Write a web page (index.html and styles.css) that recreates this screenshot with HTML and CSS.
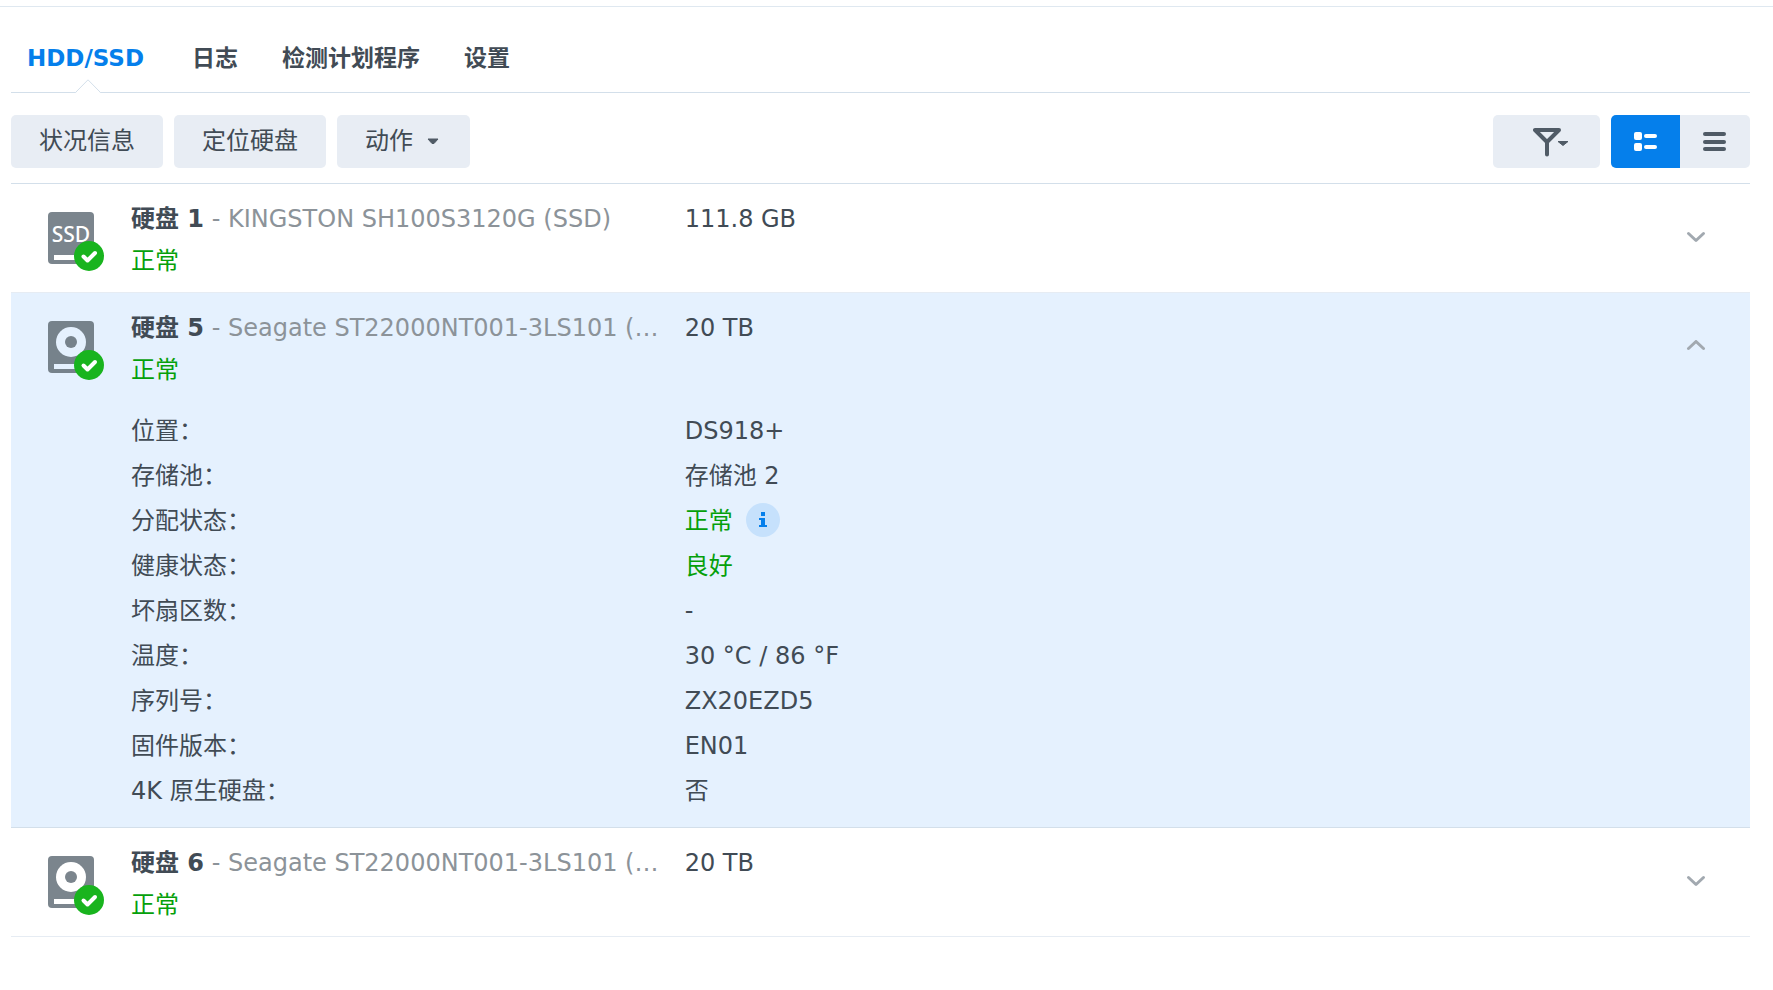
FILE: index.html
```html
<!DOCTYPE html>
<html lang="zh-CN">
<head>
    <meta charset="UTF-8">
    <meta name="viewport" content="width=device-width, initial-scale=1.0">
    <title>HDD/SSD</title>
    <link rel="stylesheet" href="styles.css">
</head>
<body>
    <main class="panel">
        <nav class="tabs">
            <a class="tab active" href="#disks">HDD/SSD
                <svg class="tab-arrow" width="26" height="14" viewBox="0 0 26 14"><path d="M0 14L1 13.5 13 .8 25 13.5 26 14z" fill="#fff"/><path d="M.5 13.5L13 .8l12.5 12.7" fill="none" stroke="#d3dfea"/></svg>
            </a>
            <a class="tab" href="#log">日志</a>
            <a class="tab" href="#schedule">检测计划程序</a>
            <a class="tab" href="#settings">设置</a>
        </nav>

        <div class="toolbar">
            <button class="btn" type="button">状况信息</button>
            <button class="btn" type="button">定位硬盘</button>
            <button class="btn menu-btn" type="button">动作
                <svg width="12" height="7" viewBox="0 0 12 7"><path d="M1 1h10L7 5.500H5z" fill="#505b66" stroke="#505b66" stroke-linejoin="round"/></svg>
            </button>
            <button class="btn filter-btn" type="button" aria-label="筛选">
                <svg width="36" height="30" viewBox="0 0 36 30">
                    <path d="M2 3h24L14 15zM14 15v12.500" fill="none" stroke="#505b66" stroke-width="4" stroke-linecap="round" stroke-linejoin="round"/>
                    <path d="M25 14.500h10L30 18.500z" fill="#505b66" stroke="#505b66" stroke-linejoin="round"/>
                </svg>
            </button>
            <div class="view-switch">
                <button class="btn view-btn active" type="button" aria-label="详细视图">
                    <svg width="24" height="20" viewBox="0 0 24 20" fill="#fff">
                        <rect x="0" y="0" width="8" height="8" rx="2"/><rect x="10" y="2" width="13" height="4" rx="2"/>
                        <rect x="0" y="11" width="8" height="8" rx="2"/><rect x="10" y="13" width="13" height="4" rx="2"/>
                    </svg>
                </button>
                <button class="btn view-btn" type="button" aria-label="列表视图">
                    <svg width="24" height="20" viewBox="0 0 24 20" fill="#505b66">
                        <rect x="0" y="0" width="23" height="4" rx="2"/><rect x="0" y="8" width="23" height="4" rx="2"/><rect x="0" y="15" width="23" height="4" rx="2"/>
                    </svg>
                </button>
            </div>
        </div>

        <section class="disk">
            <div class="disk-head">
                <svg class="disk-icon" width="60" height="60" viewBox="0 0 60 60">
                    <rect x="0" y="0" width="46" height="52" rx="4" fill="#7b858d"/>
                    <text class="ssd-label" x="23" y="30" text-anchor="middle">SSD</text>
                    <rect x="6" y="43" width="24" height="5" fill="#fff"/>
                    <circle cx="41" cy="44" r="15" fill="#19b41e"/>
                    <path d="M35.500 44.500l4 4L47 41" fill="none" stroke="#fff" stroke-width="4" stroke-linecap="round" stroke-linejoin="round"/>
                </svg>
                <div class="disk-info">
                    <div class="disk-name"><strong>硬盘 1</strong> - KINGSTON SH100S3120G (SSD)</div>
                    <div class="disk-size">111.8 GB</div>
                    <div class="ok">正常</div>
                </div>
                <button class="toggle" type="button" aria-label="展开">
                    <svg width="20" height="12" viewBox="0 0 20 12"><path d="M2.500 2.500L10 9.500l7.500-7" class="chevron"/></svg>
                </button>
            </div>
        </section>

        <section class="disk selected">
            <div class="disk-head">
                <svg class="disk-icon" width="60" height="60" viewBox="0 0 60 60">
                    <rect x="0" y="0" width="46" height="52" rx="4" fill="#76828b"/>
                    <circle cx="23" cy="21" r="15" fill="#e5f1fe"/>
                    <circle cx="23" cy="21" r="6" fill="#76828b"/>
                    <rect x="6" y="43" width="24" height="5" fill="#e5f1fe"/>
                    <circle cx="41" cy="44" r="15" fill="#19b41e"/>
                    <path d="M35.500 44.500l4 4L47 41" fill="none" stroke="#fff" stroke-width="4" stroke-linecap="round" stroke-linejoin="round"/>
                </svg>
                <div class="disk-info">
                    <div class="disk-name"><strong>硬盘 5</strong> - Seagate ST22000NT001-3LS101 (…</div>
                    <div class="disk-size">20 TB</div>
                    <div class="ok">正常</div>
                </div>
                <button class="toggle" type="button" aria-label="收起">
                    <svg width="20" height="12" viewBox="0 0 20 12"><path d="M2.500 8.500L10 1.500l7.500 7" class="chevron"/></svg>
                </button>
            </div>
            <dl class="details">
                <dt>位置：</dt><dd>DS918+</dd>
                <dt>存储池：</dt><dd>存储池 2</dd>
                <dt>分配状态：</dt>
                <dd class="with-info"><span class="ok">正常</span>
                    <button class="info" type="button" aria-label="信息">
                        <svg width="8" height="16" viewBox="0 0 8 16" fill="#057feb"><path d="M2 0h4v4H2zM0 6h6v7h2v2H0v-2h2V8H0z"/></svg>
                    </button>
                </dd>
                <dt>健康状态：</dt><dd class="ok">良好</dd>
                <dt>坏扇区数：</dt><dd>-</dd>
                <dt>温度：</dt><dd>30 °C / 86 °F</dd>
                <dt>序列号：</dt><dd>ZX20EZD5</dd>
                <dt>固件版本：</dt><dd>EN01</dd>
                <dt>4K 原生硬盘：</dt><dd>否</dd>
            </dl>
        </section>

        <section class="disk">
            <div class="disk-head">
                <svg class="disk-icon" width="60" height="60" viewBox="0 0 60 60">
                    <rect x="0" y="0" width="46" height="52" rx="4" fill="#7b858d"/>
                    <circle cx="23" cy="21" r="15" fill="#fff"/>
                    <circle cx="23" cy="21" r="6" fill="#7b858d"/>
                    <rect x="6" y="43" width="24" height="5" fill="#fff"/>
                    <circle cx="41" cy="44" r="15" fill="#19b41e"/>
                    <path d="M35.500 44.500l4 4L47 41" fill="none" stroke="#fff" stroke-width="4" stroke-linecap="round" stroke-linejoin="round"/>
                </svg>
                <div class="disk-info">
                    <div class="disk-name"><strong>硬盘 6</strong> - Seagate ST22000NT001-3LS101 (…</div>
                    <div class="disk-size">20 TB</div>
                    <div class="ok">正常</div>
                </div>
                <button class="toggle" type="button" aria-label="展开">
                    <svg width="20" height="12" viewBox="0 0 20 12"><path d="M2.500 2.500L10 9.500l7.500-7" class="chevron"/></svg>
                </button>
            </div>
        </section>
    </main>
</body>
</html>
```
FILE: styles.css
```css
:root {
    --text: #414b55;
    --muted: #8c9399;
    --blue: #057feb;
    --green: #05a00a;
    --btn-bg: #e8edf4;
    --line: #d3dfea;
    --selected-bg: #e5f1fe;
}

* {
    box-sizing: border-box;
}

body {
    margin: 0;
    padding-top: 6px;
    font-family: Verdana, 'DejaVu Sans', 'Noto Sans CJK SC', sans-serif;
    font-size: 24px;
    color: var(--text);
    background-color: #fff;
}

button {
    font: inherit;
    color: inherit;
    border: none;
    padding: 0;
    cursor: pointer;
}

svg {
    display: block;
}

.panel {
    border-top: 1px solid #dfe8f0;
    padding: 0 23px 0 11px;
}

/* Tabs */
.tabs {
    display: flex;
    gap: 44px;
    height: 86px;
    padding: 0 16px;
    border-bottom: 1px solid var(--line);
}

.tab {
    position: relative;
    line-height: 102px;
    font-size: 23px;
    font-weight: bold;
    color: var(--text);
    text-decoration: none;
}

.tab.active {
    min-width: 121px;
    color: var(--blue);
}

.tab-arrow {
    position: absolute;
    left: 50%;
    bottom: -1px;
    margin-left: -13px;
}

/* Toolbar */
.toolbar {
    display: flex;
    gap: 11px;
    padding: 22px 0 15px;
    border-bottom: 1px solid var(--line);
}

.btn {
    display: flex;
    align-items: center;
    justify-content: center;
    height: 53px;
    padding: 0 28px;
    line-height: 53px;
    border-radius: 5px;
    background-color: var(--btn-bg);
}

.menu-btn {
    gap: 14px;
    padding-right: 31px;
}

.filter-btn {
    width: 107px;
    padding: 0 0 0 8px;
    margin-left: auto;
}

.view-switch {
    display: flex;
    border-radius: 5px;
    overflow: hidden;
}

.view-btn {
    width: 70px;
    padding: 0;
    border-radius: 0;
}

.view-btn.active {
    width: 69px;
    background-color: var(--blue);
}

/* Disk list */
.disk {
    border-bottom: 1px solid #e6ecf3;
}

.disk.selected {
    padding-bottom: 13px;
    background-color: var(--selected-bg);
    border-bottom-color: var(--line);
}

.disk-head {
    position: relative;
    display: flex;
    height: 108px;
    padding-left: 37px;
}

.disk-icon {
    flex: none;
    margin-top: 28px;
}

.ssd-label {
    font-family: 'Noto Sans', sans-serif;
    font-size: 21px;
    font-weight: 500;
    fill: #fff;
}

.disk-info,
.details {
    display: grid;
    grid-template-columns: 34.2% 1fr;
}

.disk-info {
    flex: 1;
    min-width: 0;
    grid-auto-rows: 42px;
    margin-left: 23px;
    padding-top: 14px;
    line-height: 42px;
}

.disk-name {
    color: var(--muted);
    white-space: nowrap;
}

.disk-name strong {
    color: var(--text);
}

.ok {
    color: var(--green);
}

.toggle {
    position: absolute;
    right: 38px;
    top: 37px;
    width: 32px;
    height: 32px;
    display: grid;
    place-items: center;
    background: none;
}

.chevron {
    fill: none;
    stroke: #a2a9b0;
    stroke-width: 3;
    stroke-linecap: round;
    stroke-linejoin: round;
}

.details {
    grid-auto-rows: 45px;
    margin: 8px 0 0 120px;
    line-height: 45px;
}

.details dd {
    margin: 0;
}

.with-info {
    display: flex;
    align-items: center;
    gap: 13px;
}

.info {
    display: grid;
    place-items: center;
    width: 34px;
    height: 34px;
    margin-bottom: 4px;
    border-radius: 50%;
    background-color: #c6e1fc;
}
```
